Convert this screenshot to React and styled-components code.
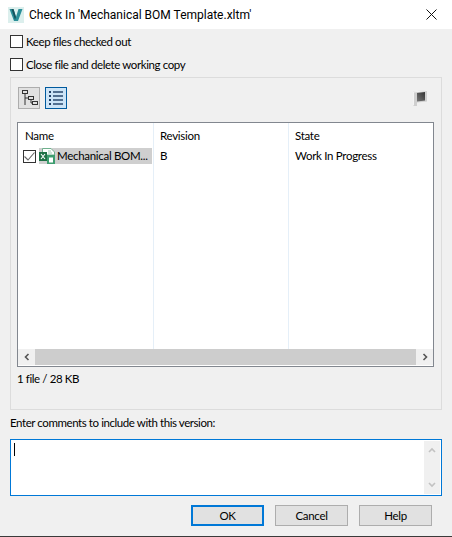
import React from 'react';
import styled, { createGlobalStyle } from 'styled-components';

const Global = createGlobalStyle`
    html, body {
        margin: 0;
        padding: 0;
        background: #f0f0f0;
    }
    * {
        box-sizing: border-box;
    }
`;

const App = () => {
    return (
        <>
            <Global />
            <Dialog>
                <TitleBar>
                    <AppIcon viewBox="0 0 16 16">
                        <rect width="16" height="16" fill="#dcefed" />
                        <path d="M1.5 2 H5.5 L8 10 L10.5 2 H14.5 L10 14 H6 Z" fill="#2b8f98" />
                        <path d="M5.5 2 L8 10 L7 13 L3.5 2 Z" fill="#16525c" />
                    </AppIcon>
                    <Title>Check In 'Mechanical BOM Template.xltm'</Title>
                    <CloseIcon viewBox="0 0 11 11">
                        <path d="M0.5 0.5 L10.5 10.5 M10.5 0.5 L0.5 10.5" stroke="#111" strokeWidth="1" fill="none" />
                    </CloseIcon>
                </TitleBar>

                <Body>
                    <OptionRow>
                        <CheckBox />
                        <span>Keep files checked out</span>
                    </OptionRow>
                    <OptionRow $second>
                        <CheckBox />
                        <span>Close file and delete working copy</span>
                    </OptionRow>

                    <Group>
                        <Toolbar>
                            <ToolButton>
                                <svg width="18" height="18" viewBox="0 0 18 18">
                                    <g fill="none" stroke="#333" strokeWidth="1">
                                        <rect x="2.5" y="1.5" width="5" height="3" />
                                        <rect x="8.5" y="7.5" width="5" height="3" />
                                        <rect x="12.5" y="12.5" width="5" height="3" />
                                        <path d="M5 4.5 V16 M5 9 H8.5 M11 10.5 V14 H12.5" />
                                    </g>
                                </svg>
                            </ToolButton>
                            <ToolButton $active>
                                <svg width="18" height="18" viewBox="0 0 18 18">
                                    <g fill="#1f3f66">
                                        <rect x="2" y="2" width="2" height="2" />
                                        <rect x="2" y="6" width="2" height="2" />
                                        <rect x="2" y="10" width="2" height="2" />
                                        <rect x="2" y="14" width="2" height="2" />
                                        <rect x="6" y="2.3" width="10" height="1.4" />
                                        <rect x="6" y="6.3" width="10" height="1.4" />
                                        <rect x="6" y="10.3" width="10" height="1.4" />
                                        <rect x="6" y="14.3" width="10" height="1.4" />
                                    </g>
                                </svg>
                            </ToolButton>
                            <FlagIcon viewBox="0 0 15 16">
                                <defs>
                                    <linearGradient id="flagFill" x1="1" y1="0" x2="0" y2="1">
                                        <stop offset="0" stopColor="#333" />
                                        <stop offset="1" stopColor="#777" />
                                    </linearGradient>
                                </defs>
                                <path d="M0 1.5 L14 0 V11.5 L4 12.5 V16 H1 L0 15 Z" fill="#cfcfcf" />
                                <path d="M0 1.5 L14 0 V1 L1 2.5 V15 L0 15 Z" fill="#f4f4f4" />
                                <path d="M4 3 L12 2 V10.5 L4 11.5 Z" fill="url(#flagFill)" />
                            </FlagIcon>
                        </Toolbar>

                        <ListView>
                            <Columns>
                                <NameColumn>
                                    <HeaderCell>Name</HeaderCell>
                                    <NameRow>
                                        <RowCheck>
                                            <svg width="11" height="9" viewBox="0 0 11 9">
                                                <path d="M0.5 4.5 L4 8 L10.5 0.5" fill="none" stroke="#666" strokeWidth="1.1" />
                                            </svg>
                                        </RowCheck>
                                        <Selection>
                                            <svg width="16" height="16" viewBox="0 0 16 16">
                                                <path d="M3.5 0.5 H12 L15.5 4 V7 H3.5 Z" fill="#fff" stroke="#6fb08d" strokeWidth="1" />
                                                <path d="M9 3 H12 M9 5 H13" stroke="#9cc9b0" strokeWidth="1" />
                                                <rect x="0" y="4" width="8" height="9" fill="#1e7145" />
                                                <path d="M2 6 L6 11 M6 6 L2 11" stroke="#fff" strokeWidth="1.1" />
                                                <rect x="8" y="7" width="8" height="9" fill="#3d9d6f" />
                                                <rect x="10" y="9.5" width="4" height="5" fill="#fff" />
                                            </svg>
                                            <NameLabel>Mechanical BOM...</NameLabel>
                                        </Selection>
                                    </NameRow>
                                </NameColumn>
                                <Column $width={135}>
                                    <HeaderCell $tight>Revision</HeaderCell>
                                    <ValueCell>B</ValueCell>
                                </Column>
                                <Column $width={141} $last>
                                    <HeaderCell $tight>State</HeaderCell>
                                    <ValueCell>Work In Progress</ValueCell>
                                </Column>
                            </Columns>
                            <ScrollBar>
                                <ScrollArrow>
                                    <svg width="8" height="8" viewBox="0 0 8 8">
                                        <path d="M5.5 1 L2.5 4 L5.5 7" fill="none" stroke="#555" strokeWidth="1.6" />
                                    </svg>
                                </ScrollArrow>
                                <ScrollThumb />
                                <ScrollArrow>
                                    <svg width="8" height="8" viewBox="0 0 8 8">
                                        <path d="M2.5 1 L5.5 4 L2.5 7" fill="none" stroke="#555" strokeWidth="1.6" />
                                    </svg>
                                </ScrollArrow>
                            </ScrollBar>
                        </ListView>
                        <Summary>1 file / 28 KB</Summary>
                    </Group>

                    <CommentLabel>Enter comments to include with this version:</CommentLabel>
                    <CommentBox>
                        <Caret />
                        <CommentScroll>
                            <svg width="8" height="6" viewBox="0 0 8 6">
                                <path d="M1 5 L4 2 L7 5" fill="none" stroke="#c2c2c2" strokeWidth="1.6" />
                            </svg>
                            <svg width="8" height="6" viewBox="0 0 8 6">
                                <path d="M1 1 L4 4 L7 1" fill="none" stroke="#c2c2c2" strokeWidth="1.6" />
                            </svg>
                        </CommentScroll>
                    </CommentBox>

                    <Buttons>
                        <Button $primary>OK</Button>
                        <Button>Cancel</Button>
                        <Button>Help</Button>
                    </Buttons>
                </Body>
                <BottomEdge />
            </Dialog>
        </>
    )
}

export default App;


const Dialog = styled.div`
    width: 452px;
    height: 537px;
    display: flex;
    flex-direction: column;
    overflow: hidden;
    background: #f0f0f0;
    color: #000;
    font-family: Lato, "Noto Sans", sans-serif;
    font-size: 11.5px;
    letter-spacing: -0.3px;
`;

const TitleBar = styled.div`
    height: 29px;
    flex: none;
    display: flex;
    align-items: center;
    padding: 0 15px 0 8px;
    background: #fff;
`;

const AppIcon = styled.svg`
    width: 16px;
    height: 16px;
    margin-right: 5px;
`;

const Title = styled.div`
    flex: 1;
    font-family: Roboto, sans-serif;
    font-size: 12px;
    letter-spacing: 0;
    color: #000;
`;

const CloseIcon = styled.svg`
    width: 11px;
    height: 11px;
`;

const Body = styled.div`
    flex: 1;
    display: flex;
    flex-direction: column;
    padding: 5px 10px 0;
`;

const OptionRow = styled.div`
    height: 15px;
    display: flex;
    align-items: center;
    gap: 3px;
    letter-spacing: -0.4px;
    margin-top: ${props => props.$second ? '8px' : '0'};
`;

const CheckBox = styled.div`
    width: 13px;
    height: 13px;
    border: 1px solid #333;
    background: #fff;
`;

const Group = styled.div`
    margin-top: 5px;
    height: 333px;
    border: 1px solid #dcdcdc;
    padding: 7px 7px 0 6px;
`;

const Toolbar = styled.div`
    display: flex;
    align-items: center;
    gap: 5px;
    height: 26px;
    margin-left: 1px;
`;

const ToolButton = styled.div`
    width: 22px;
    height: 22px;
    display: flex;
    align-items: center;
    justify-content: center;
    border: 1px solid ${props => props.$active ? '#005a9e' : '#adadad'};
    background: ${props => props.$active ? '#cce4f7' : '#e1e1e1'};
`;

const FlagIcon = styled.svg`
    width: 15px;
    height: 16px;
    margin-left: auto;
    margin-right: 6px;
`;

const ListView = styled.div`
    margin-top: 11px;
    height: 245px;
    display: flex;
    flex-direction: column;
    border: 1px solid #82878f;
    background: #fff;
`;

const Columns = styled.div`
    flex: 1;
    display: flex;
`;

const Column = styled.div`
    width: ${props => props.$width}px;
    flex: ${props => props.$last ? '1' : 'none'};
    border-right: ${props => props.$last ? 'none' : '1px solid #e5eff8'};
`;

const NameColumn = styled(Column)`
    width: 136px;
    flex: none;
    border-right: 1px solid #e5eff8;
`;

const HeaderCell = styled.div`
    height: 25px;
    padding: 5px 0 0 ${props => props.$tight ? '6px' : '7px'};
    line-height: 16px;
`;

const ValueCell = styled.div`
    padding-left: 6px;
    line-height: 16px;
`;

const NameRow = styled.div`
    height: 16px;
    display: flex;
    align-items: center;
    margin-left: 5px;
`;

const RowCheck = styled.div`
    width: 13px;
    height: 13px;
    margin-right: 3px;
    flex: none;
    display: flex;
    align-items: center;
    justify-content: center;
    border: 1px solid #333;
    background: #fff;
`;

const Selection = styled.div`
    display: flex;
    align-items: center;
    width: 113px;
    height: 16px;
    background: #cfcfcf;
`;

const NameLabel = styled.div`
    margin-left: 2px;
    line-height: 16px;
    white-space: nowrap;
    color: #000;
`;

const ScrollBar = styled.div`
    height: 16px;
    flex: none;
    margin-bottom: 1px;
    display: flex;
    background: #f0f0f0;
`;

const ScrollArrow = styled.div`
    width: 17px;
    flex: none;
    display: flex;
    align-items: center;
    justify-content: center;
`;

const ScrollThumb = styled.div`
    flex: 1;
    background: #cdcdcd;
`;

const Summary = styled.div`
    margin-top: 4px;
    line-height: 16px;
    letter-spacing: -0.4px;
`;

const CommentLabel = styled.div`
    margin-top: 5px;
    line-height: 16px;
    letter-spacing: -0.42px;
`;

const CommentBox = styled.div`
    position: relative;
    margin-top: 8px;
    height: 57px;
    padding: 2px;
    border: 1px solid #0078d7;
    background: #fff;
`;

const Caret = styled.div`
    width: 1px;
    height: 13px;
    margin: 1px 0 0 1px;
    background: #000;
`;

const CommentScroll = styled.div`
    position: absolute;
    top: 1px;
    right: 1px;
    bottom: 1px;
    width: 16px;
    display: flex;
    flex-direction: column;
    align-items: center;
    justify-content: space-between;
    padding: 6px 0;
    background: #f0f0f0;
`;

const Buttons = styled.div`
    margin-top: 9px;
    margin-right: 10px;
    display: flex;
    justify-content: flex-end;
    gap: 11px;
`;

const Button = styled.div`
    width: 73px;
    height: 21px;
    padding-bottom: 1px;
    display: flex;
    align-items: center;
    justify-content: center;
    background: #e1e1e1;
    border: ${props => props.$primary ? '2px solid #0078d7' : '1px solid #adadad'};
    color: #000;
`;

const BottomEdge = styled.div`
    height: 1px;
    flex: none;
    background: #3a3a3a;
`;
